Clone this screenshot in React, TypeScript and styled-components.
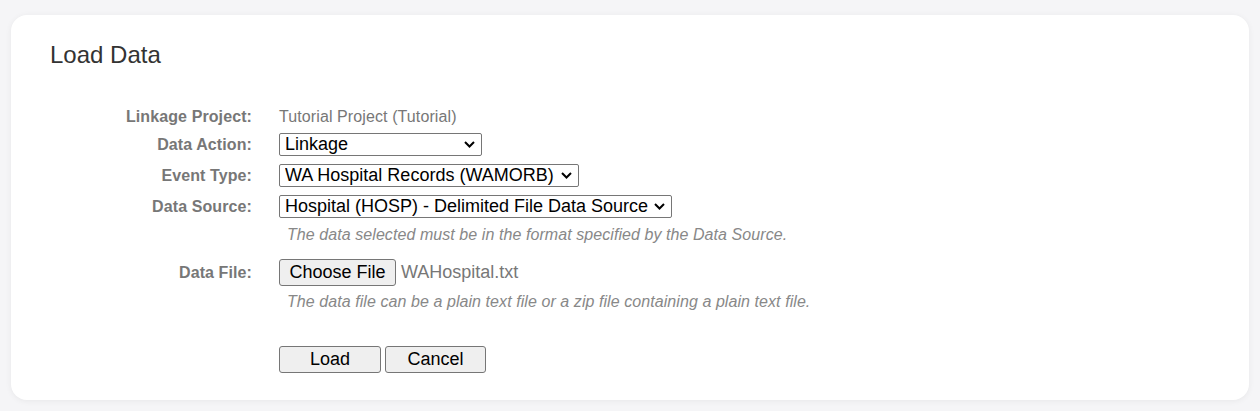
import React from 'react';
import styled, { createGlobalStyle } from 'styled-components';

const GlobalStyle = createGlobalStyle`
    html, body {
        margin: 0;
        padding: 0;
        background: #f5f5f7;
        font-family: "Liberation Sans", Arial, sans-serif;
    }
`;

const Page = styled.div`
    padding: 15px 11px 11px 11px;
`;

const Card = styled.div`
    background: #fff;
    border-radius: 16px;
    box-shadow: 0 1px 6px rgba(0, 0, 0, 0.06);
    padding: 26px 39px 27px 39px;
`;

const Title = styled.h2`
    margin: 0;
    font-size: 24px;
    line-height: 28px;
    font-weight: normal;
    color: #333;
`;

const Form = styled.div`
    margin-top: 36px;
`;

const Row = styled.div<{ $h?: number; $mt?: number }>`
    display: grid;
    grid-template-columns: 202px 1fr;
    column-gap: 27px;
    align-items: center;
    height: ${(p) => (p.$h ? `${p.$h}px` : 'auto')};
    margin-top: ${(p) => p.$mt || 0}px;
`;

const Label = styled.div`
    text-align: right;
    font-size: 16px;
    font-weight: bold;
    color: #777;
    line-height: 24px;
    letter-spacing: 0.1px;
`;

const Value = styled.div`
    font-size: 16px;
    line-height: 24px;
    color: #777;
    letter-spacing: 0.1px;
`;

const SelectWrap = styled.div`
    position: relative;
    display: inline-block;
    vertical-align: middle;
    svg {
        position: absolute;
        right: 7px;
        top: 8px;
        pointer-events: none;
    }
`;

const Select = styled.select<{ $w: number }>`
    display: block;
    appearance: none;
    width: ${(p) => p.$w}px;
    height: 23px;
    font-family: "Liberation Sans", Arial, sans-serif;
    font-size: 18px;
    line-height: 21px;
    color: #000;
    background: #fff;
    border: 1px solid #767676;
    border-radius: 2px;
    padding: 0 22px 0 5px;
    box-sizing: border-box;
`;

const Hint = styled.div`
    padding-left: 8px;
    font-size: 16px;
    line-height: 20px;
    font-style: italic;
    color: #888;
    letter-spacing: 0.07px;
`;

const FileField = styled.div`
    display: flex;
    align-items: center;
    gap: 5px;
`;

const NativeButton = styled.button<{ $w: number }>`
    width: ${(p) => p.$w}px;
    height: 27px;
    padding: 0;
    font-family: "Liberation Sans", Arial, sans-serif;
    font-size: 18px;
    color: #000;
    background: #efefef;
    border: 1px solid #767676;
    border-radius: 3px;
    box-sizing: border-box;
`;

const FileName = styled.span`
    font-size: 18px;
    color: #777;
`;

const Actions = styled.div`
    display: flex;
    gap: 4px;
`;

const Chevron = () => (
    <svg width="11" height="7" viewBox="0 0 11 7">
        <path d="M1 1 L5.5 5.5 L10 1" fill="none" stroke="#000" strokeWidth="2" />
    </svg>
);

const Dropdown = (props: { width: number; options: string[] }) => (
    <SelectWrap>
        <Select $w={props.width} defaultValue={props.options[0]}>
            {props.options.map((o) => (
                <option key={o} value={o}>{o}</option>
            ))}
        </Select>
        <Chevron />
    </SelectWrap>
);

const App = () => {
    return (
        <Page>
            <GlobalStyle />
            <Card>
                <Title>Load Data</Title>
                <Form>
                    <Row $h={24}>
                        <Label>Linkage Project:</Label>
                        <Value>Tutorial Project (Tutorial)</Value>
                    </Row>
                    <Row $h={31}>
                        <Label>Data Action:</Label>
                        <div>
                            <Dropdown width={203} options={['Linkage', 'Load Only']} />
                        </div>
                    </Row>
                    <Row $h={31}>
                        <Label>Event Type:</Label>
                        <div>
                            <Dropdown width={300} options={['WA Hospital Records (WAMORB)']} />
                        </div>
                    </Row>
                    <Row $h={31}>
                        <Label>Data Source:</Label>
                        <div>
                            <Dropdown width={393} options={['Hospital (HOSP) - Delimited File Data Source']} />
                        </div>
                    </Row>
                    <Row $mt={3}>
                        <div />
                        <Hint>The data selected must be in the format specified by the Data Source.</Hint>
                    </Row>
                    <Row $mt={14}>
                        <Label>Data File:</Label>
                        <FileField>
                            <NativeButton $w={117}>Choose File</NativeButton>
                            <FileName>WAHospital.txt</FileName>
                        </FileField>
                    </Row>
                    <Row $mt={6}>
                        <div />
                        <Hint>The data file can be a plain text file or a zip file containing a plain text file.</Hint>
                    </Row>
                    <Row $mt={34}>
                        <div />
                        <Actions>
                            <NativeButton $w={102}>Load</NativeButton>
                            <NativeButton $w={101}>Cancel</NativeButton>
                        </Actions>
                    </Row>
                </Form>
            </Card>
        </Page>
    );
};

export default App;
